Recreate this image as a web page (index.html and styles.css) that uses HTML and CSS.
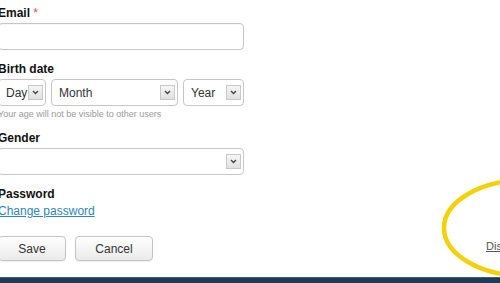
FILE: index.html
```html
<!DOCTYPE html>
<html lang="en">
<head>
    <meta charset="UTF-8">
    <meta name="viewport" content="width=device-width, initial-scale=1.0">
    <title>Edit profile</title>
    <link rel="stylesheet" href="styles.css">
</head>
<body>
    <div class="page">
        <form class="profile-form">
            <div class="field">
                <label class="field-label" for="email">Email <span class="req">*</span></label>
                <input type="text" id="email" class="text-input">
            </div>

            <div class="field">
                <span class="field-label">Birth date</span>
                <div class="date-row">
                    <label class="select select-day">
                        <select><option>Day</option></select>
                        <span class="arrow"><svg width="7" height="5" viewBox="0 0 7 5"><path d="M1 1l2.5 2.5L6 1" fill="none" stroke="#444" stroke-width="1.4"/></svg></span>
                    </label>
                    <label class="select select-month">
                        <select><option>Month</option></select>
                        <span class="arrow"><svg width="7" height="5" viewBox="0 0 7 5"><path d="M1 1l2.5 2.5L6 1" fill="none" stroke="#444" stroke-width="1.4"/></svg></span>
                    </label>
                    <label class="select select-year">
                        <select><option>Year</option></select>
                        <span class="arrow"><svg width="7" height="5" viewBox="0 0 7 5"><path d="M1 1l2.5 2.5L6 1" fill="none" stroke="#444" stroke-width="1.4"/></svg></span>
                    </label>
                </div>
                <p class="hint">Your age will not be visible to other users</p>
            </div>

            <div class="field">
                <span class="field-label">Gender</span>
                <label class="select">
                    <select><option></option></select>
                    <span class="arrow"><svg width="7" height="5" viewBox="0 0 7 5"><path d="M1 1l2.5 2.5L6 1" fill="none" stroke="#444" stroke-width="1.4"/></svg></span>
                </label>
            </div>

            <div class="field">
                <span class="field-label">Password</span>
                <a href="#" class="link">Change password</a>
            </div>

            <div class="actions">
                <button type="button" class="btn btn-save">Save</button>
                <button type="button" class="btn btn-cancel">Cancel</button>
            </div>
        </form>

        <div class="aside">
            <a href="#" class="disable-link">Disable account</a>
            <svg class="circle-mark" width="60" height="106" viewBox="0 0 60 106">
                <ellipse cx="85" cy="52" rx="82" ry="48" fill="none" stroke="#f3d106" stroke-width="4.5"/>
            </svg>
        </div>
    </div>
    <div class="footer-bar"></div>
</body>
</html>
```

FILE: styles.css
```css
html, body {
    margin: 0;
    padding: 0;
    height: 283px;
    overflow: hidden;
    background: #fff;
}
body {
    font-family: "Liberation Sans", Arial, sans-serif;
    color: #222;
    display: flex;
    flex-direction: column;
}
.page {
    display: flex;
    height: 277px;
}
.profile-form {
    width: 246px;
    margin-left: -2px;
    padding-top: 6px;
}
.field {
    margin-bottom: 12px;
}
.field-label {
    display: block;
    font-size: 12px;
    line-height: 14px;
    font-weight: bold;
    color: #111;
    margin-bottom: 3px;
}
.req {
    color: #d9534f;
    font-weight: normal;
}
.text-input {
    display: block;
    box-sizing: border-box;
    width: 246px;
    height: 27px;
    border: 1px solid #c6c6c6;
    border-radius: 4px;
    box-shadow: inset 0 1px 1px rgba(0,0,0,0.04);
    margin: 0;
}
.date-row {
    display: flex;
    gap: 5px;
}
.select {
    display: flex;
    align-items: center;
    box-sizing: border-box;
    height: 27px;
    border: 1px solid #c6c6c6;
    border-radius: 4px;
    padding-right: 2px;
    background: #fff;
}
.select select {
    flex: 1;
    min-width: 0;
    appearance: none;
    -webkit-appearance: none;
    border: none;
    background: transparent;
    font-family: "Liberation Sans", Arial, sans-serif;
    font-size: 12px;
    color: #333;
    padding: 0 0 0 7px;
    outline: none;
}
.select-day { width: 48px; }
.select-month { width: 127px; }
.select-year { width: 61px; }
.arrow {
    display: flex;
    align-items: center;
    justify-content: center;
    box-sizing: border-box;
    width: 15px;
    height: 15px;
    border: 1px solid #c8c8c8;
    background: linear-gradient(#f6f6f6, #e0e0e0);
}
.hint {
    margin: 3px 0 0;
    font-size: 9px;
    line-height: 10px;
    color: #9a9a9a;
}
.link {
    display: block;
    font-size: 12px;
    line-height: 14px;
    color: #2f86b8;
}
.actions {
    display: flex;
    gap: 9px;
    margin-top: 18px;
}
.btn {
    height: 25px;
    border: 1px solid #c4c4c4;
    border-radius: 4px;
    background: linear-gradient(#ffffff, #eaeaea);
    box-shadow: 0 1px 1px rgba(0,0,0,0.06);
    font-family: "Liberation Sans", Arial, sans-serif;
    font-size: 12px;
    color: #333;
    padding: 0;
}
.btn-save { width: 68px; }
.btn-cancel { width: 78px; }
.aside {
    position: relative;
    flex: 1;
    display: flex;
    align-items: flex-end;
    padding-left: 242px;
    padding-bottom: 25px;
    overflow: hidden;
}
.disable-link {
    font-size: 11px;
    color: #555;
    white-space: nowrap;
}
.circle-mark {
    position: absolute;
    left: 197px;
    top: 176px;
}
.footer-bar {
    height: 5px;
    background: #1e3a57;
    border-top: 1px solid #3d5f7f;
}
```
